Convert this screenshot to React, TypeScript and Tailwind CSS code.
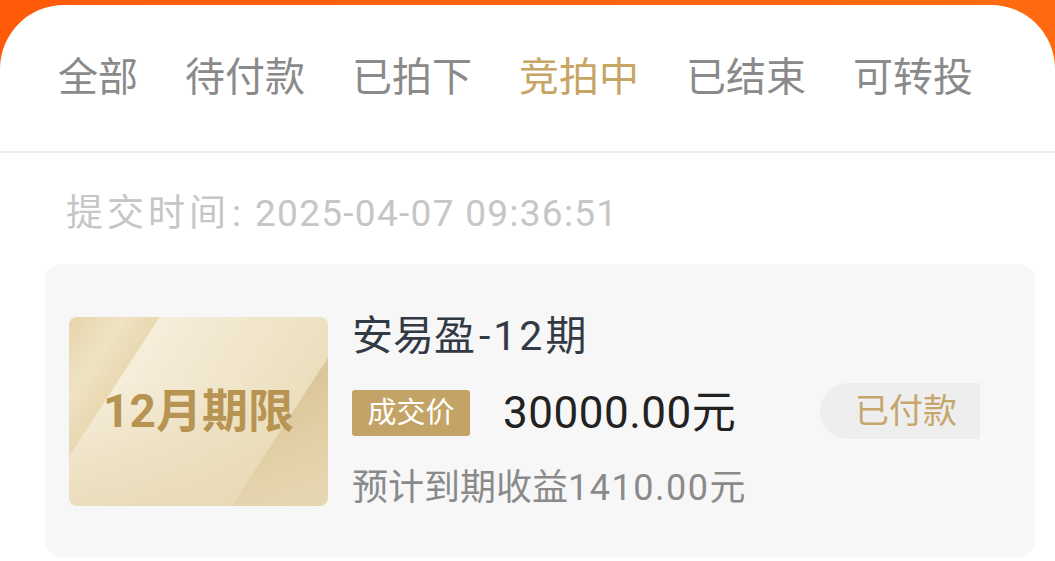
import React from 'react';

const tabs = ['全部', '待付款', '已拍下', '竞拍中', '已结束', '可转投'];
const active = '竞拍中';

export default function App() {
  return (
    <div
      className="h-[561px] w-full overflow-hidden bg-gradient-to-r from-[#ff5a0a] to-[#ff6a10]"
      style={{ fontFamily: 'Roboto, "Noto Sans CJK SC", sans-serif' }}
    >
      <div className="mt-[5px] h-full rounded-t-[64px] bg-white">
        {/* tabs */}
        <div className="flex h-[148px] items-center gap-[47px] border-b-2 border-[#eeeeee] pl-[58px]">
          {tabs.map((t) => (
            <span
              key={t}
              className={
                'text-[40px] leading-none ' +
                (t === active ? 'text-[#c6a565]' : 'text-[#8a8a8a]')
              }
            >
              {t}
            </span>
          ))}
        </div>

        {/* submit time */}
        <div className="flex items-center pl-[66px] pt-[41px] text-[37px] leading-[40px] text-[#c6c6c6]">
          <span className="tracking-[4px]">提交时间</span>
          <span className="ml-[2px] mr-[14px]">:</span>
          <span className="tracking-[1.3px]">2025-04-07 09:36:51</span>
        </div>

        {/* order card */}
        <div className="ml-[45px] mr-[20px] mt-[30px] flex items-center rounded-[16px] bg-[#f7f7f7] pb-[51px] pl-[24px] pt-[52px]">
          <div className="flex h-[189px] w-[259px] shrink-0 items-center justify-center rounded-[8px] bg-[linear-gradient(to_bottom,rgba(232,217,181,0)_35%,rgba(232,217,181,0.75)_100%),linear-gradient(123deg,#e6d4aa_0%,#efe3c4_14%,#e9d9b2_23.5%,#f6eedb_24%,#f1e6cc_50%,#ecdfbe_74.5%,#dcc799_75%,#e3d0a6_100%)]">
            <span className="text-[46px] font-bold leading-none text-[#b79452]">12月期限</span>
          </div>

          <div className="ml-[24px] flex flex-1 flex-col">
            <div className="text-[41px] leading-none text-[#323a45]">
              安易盈<span className="ml-[4px] tracking-[3px]">-12</span>期
            </div>
            <div className="mt-[33px] flex items-center">
              <span className="flex h-[46px] w-[118px] items-center justify-center rounded-[3px] bg-[#c3a466] text-[29px] leading-none text-white">
                成交价
              </span>
              <span className="ml-[33px] text-[44px] leading-none text-[#222222]">
                <span className="tracking-[0.5px]">30000.00</span>元
              </span>
            </div>
            <div className="mt-[34px] text-[36px] leading-none text-[#8a8a8a]">
              预计到期收益<span className="tracking-[1.5px]">1410.00</span>元
            </div>
          </div>

          <div className="mr-[55px] flex h-[56px] w-[160px] items-center rounded-l-full bg-[#eeeeee] pl-[35px] text-[34px] leading-none text-[#c6a66a]">
            已付款
          </div>
        </div>
      </div>
    </div>
  );
}
